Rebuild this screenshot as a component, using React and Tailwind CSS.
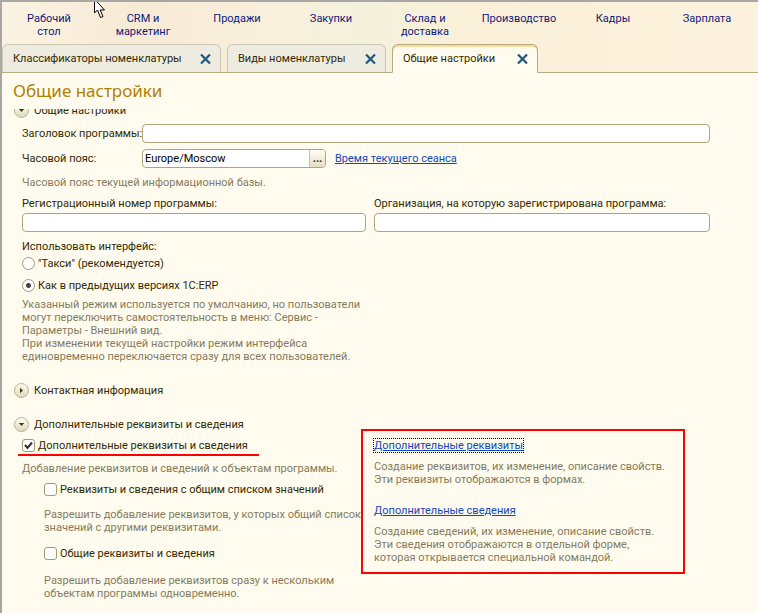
import React from 'react';

const sections = ['Рабочий\nстол', 'CRM и\nмаркетинг', 'Продажи', 'Закупки', 'Склад и\nдоставка', 'Производство', 'Кадры', 'Зарплата'];

const inputClass = 'h-[19px] w-full min-w-0 rounded border border-[#b0a47c] bg-white px-0.5 text-black outline-none';

const Close = () => (
  <svg width="11" height="10" viewBox="0 0 11 10" fill="none" stroke="#22577f" strokeWidth="2.2">
    <path d="M1 .5 10 9.5M10 .5 1 9.5" />
  </svg>
);

const Tab = ({ title, active, width }) => (
  <div
    className={`flex items-center justify-between whitespace-nowrap rounded-t-md border pl-2.5 pr-[5px] ${width} ${
      active
        ? 'relative -mb-px h-[29px] border-[#b5ab80] border-b-[#fffbee] bg-[#fffbee] shadow-[inset_0_2px_0_#f8d9a0]'
        : 'h-7 border-[#cdc8b2] border-b-0 bg-[#eeebe0]'
    }`}
  >
    <button type="button">{title}</button>
    <button type="button" aria-label="Закрыть" className="px-1"><Close /></button>
  </div>
);

const GroupHeader = ({ title, open }) => (
  <button type="button" className="-ml-2 flex h-5 items-center gap-[5px]">
    <svg width="15" height="15" viewBox="0 0 15 15">
      <defs>
        <linearGradient id="knob" x1="0" y1="0" x2="0" y2="1">
          <stop offset="0" stopColor="#fffef8" />
          <stop offset="1" stopColor="#dcd7bd" />
        </linearGradient>
      </defs>
      <circle cx="7.5" cy="7.5" r="7" fill="url(#knob)" stroke="#b9b292" />
      <path d={open ? 'M4.8 6h5.400L7.500 9z' : 'M6 4.800v5.400L9 7.500z'} fill="#4a3c00" />
    </svg>
    {title}
  </button>
);

const Check = ({ label, checked }) => (
  <label className="flex h-[14px] items-center gap-[3px] whitespace-nowrap">
    <span className="relative h-[13px] w-[13px]">
      <input
        type="checkbox"
        defaultChecked={checked}
        className="peer block h-[13px] w-[13px] appearance-none rounded-[3px] border border-[#a29a78] bg-white"
      />
      <svg className="pointer-events-none absolute left-0 top-0 hidden peer-checked:block" width="13" height="13" viewBox="0 0 13 13" fill="none" stroke="#333" strokeWidth="2">
        <path d="M3 6 5.500 9 10 3.500" />
      </svg>
    </span>
    {label}
  </label>
);

const Radio = ({ label, checked }) => (
  <label className="flex h-[14px] items-center gap-[3px]">
    <input
      type="radio"
      name="interface"
      defaultChecked={checked}
      className="h-[13px] w-[13px] appearance-none rounded-full border border-[#a29a78] bg-white checked:bg-[radial-gradient(circle,#444_0_2px,#fff_3px)]"
    />
    {label}
  </label>
);

const Hint = ({ children, className = '' }) => (
  <p className={`whitespace-nowrap text-[#857b5e] ${className}`}>{children}</p>
);

const Link = ({ children, className = '' }) => (
  <a href="#" className={`text-[#1048b8] underline ${className}`}>{children}</a>
);

export default function App() {
  return (
    <div className="relative min-h-screen overflow-hidden border-l-2 border-t-2 border-[#a9a7a3] bg-[#fffbee] font-['Roboto',sans-serif] text-[11px] leading-[13px] text-[#332a00]">
      <header className="border-b border-[#b5ab80] bg-[linear-gradient(90deg,#fbf3e2_0%,#f7ead6_18%,#f8f0dc_35%,#f3f1dc_48%,#faf0d9_62%,#fdf2dd_100%)]">
        <nav className="grid h-[42px] grid-cols-8 pr-1 pt-2.5 text-center text-[#101a7c]">
          {sections.map(s => (
            <a key={s} href="#" className="whitespace-pre-line">{s}</a>
          ))}
        </nav>
        <div className="flex items-end gap-1.5">
          <Tab title="Классификаторы номенклатуры" width="w-[219px]" />
          <Tab title="Виды номенклатуры" width="w-[159px]" />
          <Tab title="Общие настройки" width="w-[146px]" active />
        </div>
      </header>

      <h1 className="h-9 pl-[11px] pt-1.5 font-['Noto_Sans',sans-serif] text-[17px] leading-6 text-[#b08000]">Общие настройки</h1>

      <main className="overflow-hidden pl-5 pr-12">
        <div className="-mt-[9px]">
          <GroupHeader title="Общие настройки" open />
        </div>

        <div className="mt-1 grid grid-cols-[120px_1fr] items-center gap-y-1.5">
          <label htmlFor="title" className="whitespace-nowrap">Заголовок программы:</label>
          <input id="title" className={inputClass} />
          <label htmlFor="zone">Часовой пояс:</label>
          <div className="flex items-center gap-[9px]">
            <div className="flex h-[19px] w-[184px] overflow-hidden rounded border border-[#b0a47c] bg-white">
              <input id="zone" defaultValue="Europe/Moscow" className="min-w-0 flex-1 px-0.5 text-black outline-none" />
              <button type="button" className="w-4 border-l border-[#c9c09c] bg-gradient-to-b from-[#fffdf4] to-[#e6e0c2] font-bold">...</button>
            </div>
            <Link>Время текущего сеанса</Link>
          </div>
        </div>
        <Hint className="mt-2">Часовой пояс текущей информационной базы.</Hint>

        <div className="mt-2 grid grid-cols-[344px_1fr] gap-x-2 gap-y-[3px]">
          <label htmlFor="reg">Регистрационный номер программы:</label>
          <label htmlFor="org">Организация, на которую зарегистрирована программа:</label>
          <input id="reg" className={inputClass} />
          <input id="org" className={inputClass} />
        </div>

        <fieldset className="mt-2">
          <legend>Использовать интерфейс:</legend>
          <div className="mt-[3px] flex flex-col gap-2">
            <Radio label={'"Такси" (рекомендуется)'} />
            <Radio label="Как в предыдущих версиях 1С:ERP" checked />
          </div>
        </fieldset>
        <Hint className="mt-1.5">
          Указанный режим используется по умолчанию, но пользователи<br />
          могут переключить самостоятельность в меню: Сервис -<br />
          Параметры - Внешний вид.<br />
          При изменении текущей настройки режим интерфейса<br />
          единовременно переключается сразу для всех пользователей.
        </Hint>

        <div className="mt-[17px]">
          <GroupHeader title="Контактная информация" />
        </div>

        <div className="mt-3.5 flex items-start">
          <div className="w-[339px] shrink-0">
            <GroupHeader title="Дополнительные реквизиты и сведения" open />
            <div className="-ml-1 mt-1 w-[241px] border-b-2 border-[#f00] pb-0.5 pl-1">
              <Check label="Дополнительные реквизиты и сведения" checked />
            </div>
            <Hint className="mt-1.5">Добавление реквизитов и сведений к объектам программы.</Hint>
            <div className="mt-[7px] pl-[22px]">
              <Check label="Реквизиты и сведения с общим списком значений" />
              <Hint className="mt-3">
                Разрешить добавление реквизитов, у которых общий список<br />
                значений с другими реквизитами.
              </Hint>
              <div className="mt-3">
                <Check label="Общие реквизиты и сведения" />
              </div>
              <Hint className="mt-3.5">
                Разрешить добавление реквизитов сразу к нескольким<br />
                объектам программы одновременно.
              </Hint>
            </div>
          </div>
          <div className="mt-[15px] h-[145px] w-[324px] border-2 border-[#f00] pl-[11px] pt-2">
            <Link className="inline-block outline-1 outline-dotted outline-black">Дополнительные реквизиты</Link>
            <Hint className="mt-2">
              Создание реквизитов, их изменение, описание свойств.<br />
              Эти реквизиты отображаются в формах.
            </Hint>
            <Link className="mt-[18px] inline-block">Дополнительные сведения</Link>
            <Hint className="mt-2">
              Создание сведений, их изменение, описание свойств.<br />
              Эти сведения отображаются в отдельной форме,<br />
              которая открывается специальной командой.
            </Hint>
          </div>
        </div>
      </main>

      <svg className="pointer-events-none absolute -top-0.5 left-[91px]" width="13" height="19" viewBox="0 0 13 19">
        <path d="M1.500-1v14l3-3 3 7.500 2.500-1L7.200 10h4.300z" fill="#fff" stroke="#000" />
      </svg>
    </div>
  );
}
